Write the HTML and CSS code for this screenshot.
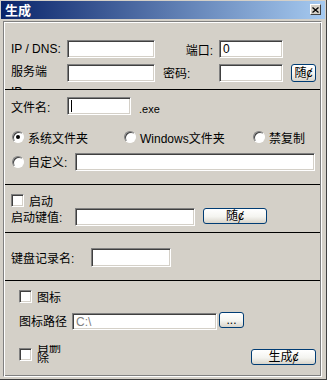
FILE: index.html
```html
<!DOCTYPE html>
<html lang="zh">
<head>
    <meta charset="UTF-8">
    <title>生成</title>
    <link rel="stylesheet" href="styles.css">
</head>
<body>
    <div class="window">
        <div class="titlebar">
            <span class="title">生成</span>
            <div class="close-btn">
                <svg width="7" height="6" viewBox="0 0 7 6"><path d="M0.5 0.5 L6.5 5.5 M6.5 0.5 L0.5 5.5" stroke="#000" stroke-width="1.3"/></svg>
            </div>
        </div>

        <div class="panel">
            <!-- server -->
            <div class="section s-server">
                <div class="row">
                    <span class="label w56">IP / DNS:</span>
                    <div class="field w88"></div>
                    <span class="label w64 right">端口:</span>
                    <div class="field w64">0</div>
                </div>
                <div class="row row-gap6">
                    <span class="label wrap-ip">服务端IP</span>
                    <div class="field w88"></div>
                    <span class="label w64 indent">密码:</span>
                    <div class="field w64"></div>
                    <button class="btn btn-small">随ȼ</button>
                </div>
            </div>

            <!-- file -->
            <div class="section s-file">
                <div class="row">
                    <span class="label w56">文件名:</span>
                    <div class="field w64"><span class="caret"></span></div>
                    <span class="ext">.exe</span>
                </div>
                <div class="row radios">
                    <label class="option o1"><span class="radio checked"><span class="dot"></span></span>系统文件夹</label>
                    <label class="option o2"><span class="radio"></span>Windows文件夹</label>
                    <label class="option"><span class="radio"></span>禁复制</label>
                </div>
                <div class="row custom">
                    <label class="option o3"><span class="radio"></span>自定义:</label>
                    <div class="field w240"></div>
                </div>
            </div>

            <!-- startup -->
            <div class="section s-start">
                <div class="row check-row">
                    <span class="checkbox"></span>
                    <span>启动</span>
                </div>
                <div class="row key-row">
                    <span class="label w64">启动键值:</span>
                    <div class="field w120"></div>
                    <button class="btn btn-rand">随ȼ</button>
                </div>
            </div>

            <!-- keylog -->
            <div class="section s-keylog">
                <div class="row">
                    <span class="label w80">键盘记录名:</span>
                    <div class="field w80 h19"></div>
                </div>
            </div>

            <!-- icon / build -->
            <div class="section s-icon">
                <div class="row check-row">
                    <span class="checkbox"></span>
                    <span>图标</span>
                </div>
                <div class="row path-row">
                    <span class="label w53">图标路径</span>
                    <div class="field w145 h17 muted">C:\</div>
                    <button class="btn btn-browse">...</button>
                </div>
                <div class="row build-row">
                    <span class="checkbox"></span>
                    <span class="label wrap-del"><span>自删除</span></span>
                    <button class="btn btn-build">生成ȼ</button>
                </div>
            </div>
        </div>
    </div>
</body>
</html>
```

FILE: styles.css
```css
body {
    margin: 0;
    background-color: #d4d0c8;
    font-family: "Liberation Sans", "Noto Sans CJK SC", sans-serif;
    font-size: 12px;
    color: #000;
}
.window {
    width: 327px;
    height: 380px;
    box-sizing: border-box;
    padding: 1px 1px 0 1px;
    border-right: 1px solid #404040;
    border-bottom: 1px solid #404040;
    overflow: hidden;
}
.titlebar {
    height: 18px;
    display: flex;
    align-items: flex-start;
    background: linear-gradient(to right, #0a246a, #a6caf0);
}
.title {
    color: #fff;
    font-weight: bold;
    font-size: 13px;
    line-height: 17px;
    padding-left: 4px;
    font-family: "Noto Sans CJK SC", sans-serif;
}
.close-btn {
    margin: 3px 4px 0 auto;
    width: 11px;
    height: 11px;
    box-sizing: border-box;
    background-color: #d4d0c8;
    border-top: 1px solid #fff;
    border-left: 1px solid #fff;
    border-right: 1px solid #404040;
    border-bottom: 1px solid #404040;
    display: flex;
    align-items: center;
    justify-content: center;
}
.panel {
    margin: 2px 3px 0 2px;
    height: 356px;
    box-sizing: border-box;
    border-top: 1px solid #808080;
    border-left: 1px solid #808080;
    border-right: 1px solid #fff;
    border-bottom: 1px solid #fff;
    box-shadow: inset 1px 1px #fff, inset -1px -1px #808080;
    padding: 1px;
}
.section {
    box-sizing: border-box;
    border-bottom: 1px solid #000;
    overflow: hidden;
    padding-left: 6px;
}
.s-server {
    height: 67px;
    padding-top: 17px;
}
.s-file {
    height: 95px;
    padding-top: 7px;
}
.s-start {
    height: 48px;
    padding-top: 9px;
}
.s-keylog {
    height: 48px;
    padding-top: 15px;
}
.s-icon {
    height: 94px;
    border-bottom: none;
    padding-top: 9px;
    padding-left: 14px;
}
.row {
    display: flex;
    align-items: center;
    height: 18px;
}
.row-gap6 {
    margin-top: 6px;
    align-items: flex-start;
}
.label {
    flex: none;
    white-space: nowrap;
}
.w53 { width: 53px; }
.w56 { width: 56px; }
.w64 { width: 64px; }
.w80 { width: 80px; }
.w88 { width: 88px; }
.w120 { width: 120px; }
.w145 { width: 145px; }
.w240 { width: 240px; }
.right {
    text-align: right;
    padding-right: 6px;
    box-sizing: border-box;
}
.indent {
    padding-left: 8px;
    box-sizing: border-box;
}
.wrap-ip {
    width: 40px;
    margin-right: 16px;
    white-space: normal;
    line-height: 20px;
    align-self: flex-start;
    margin-top: -2px;
}
.field {
    flex: none;
    height: 18px;
    box-sizing: border-box;
    background-color: #fff;
    border-top: 1px solid #808080;
    border-left: 1px solid #808080;
    border-right: 1px solid #fff;
    border-bottom: 1px solid #fff;
    box-shadow: inset 1px 1px #404040, inset -1px -1px #d4d0c8;
    padding-left: 3px;
    line-height: 16px;
    font-size: 12px;
    display: flex;
    align-items: center;
}
.h17 { height: 17px; }
.h19 { height: 19px; }
.muted {
    color: #808080;
}
.caret {
    width: 1px;
    height: 12px;
    background-color: #000;
}
.ext {
    font-size: 11px;
    margin-left: 8px;
    align-self: flex-end;
    line-height: 12px;
}
.btn {
    flex: none;
    box-sizing: border-box;
    padding: 0;
    margin: 0;
    font-family: "Liberation Sans", "Noto Sans CJK SC", "DejaVu Sans", sans-serif;
    font-size: 12px;
    line-height: 14px;
    color: #000;
    border: 1px solid #003c74;
    border-radius: 3px;
    background: linear-gradient(#ffffff, #f4f4f0 55%, #d8d4ca);
}
.btn-small {
    width: 25px;
    height: 18px;
    margin-left: 8px;
}
.radios {
    margin-top: 16px;
    height: 12px;
    padding-left: 1px;
}
.custom {
    margin-top: 10px;
    height: 17px;
    padding-left: 1px;
}
.option {
    display: flex;
    align-items: center;
    gap: 4px;
    flex: none;
    white-space: nowrap;
}
.o1 { width: 112px; }
.o2 { width: 129px; }
.o3 { width: 63px; }
.radio {
    width: 12px;
    height: 12px;
    box-sizing: border-box;
    border-radius: 50%;
    background-color: #fff;
    border: 1px solid;
    border-color: #808080 #fff #fff #808080;
    box-shadow: inset 1px 1px #404040;
    display: flex;
    align-items: center;
    justify-content: center;
}
.dot {
    width: 4px;
    height: 4px;
    border-radius: 50%;
    background-color: #000;
}
.checkbox {
    flex: none;
    width: 13px;
    height: 13px;
    box-sizing: border-box;
    background-color: #fff;
    border-top: 1px solid #808080;
    border-left: 1px solid #808080;
    border-right: 1px solid #fff;
    border-bottom: 1px solid #fff;
    box-shadow: inset 1px 1px #404040, inset -1px -1px #d4d0c8;
    margin-right: 5px;
}
.check-row {
    height: 13px;
}
.key-row {
    margin-top: 1px;
    align-items: flex-start;
}
.btn-rand {
    width: 64px;
    height: 16px;
    margin-left: 8px;
}
.path-row {
    margin-top: 9px;
    align-items: flex-start;
}
.path-row .field {
    margin-top: 1px;
}
.btn-browse {
    width: 25px;
    height: 16px;
    margin-left: 2px;
}
.build-row {
    margin-top: 15px;
    align-items: flex-start;
}
.build-row .checkbox {
    margin-top: 3px;
}
.wrap-del {
    width: 25px;
    height: 18px;
    overflow: hidden;
    white-space: normal;
    line-height: 11px;
    display: flex;
    flex-direction: column;
    justify-content: center;
}
.btn-build {
    width: 65px;
    height: 16px;
    margin: 4px 4px 0 auto;
}
```
